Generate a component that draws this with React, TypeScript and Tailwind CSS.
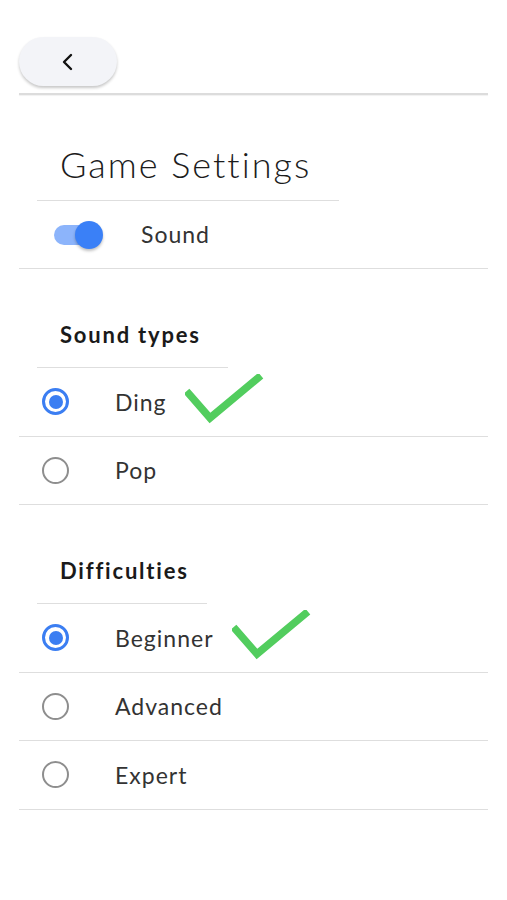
import React from "react";

function Radio({ checked }: { checked: boolean }) {
  return checked ? (
    <div className="w-[27px] h-[27px] rounded-full border-[3px] border-[#3b7ef2] flex items-center justify-center">
      <div className="w-[14px] h-[14px] rounded-full bg-[#3b7ef2]" />
    </div>
  ) : (
    <div className="w-[27px] h-[27px] rounded-full border-[2.5px] border-[#8e8e8e]" />
  );
}

function Row({ label, checked, check }: { label: string; checked: boolean; check?: number }) {
  return (
    <div className="relative h-[68.5px] flex items-center border-b border-[#dedede] pl-[23px]">
      <Radio checked={checked} />
      <span className="ml-[46px] text-[23px] text-[#333333] tracking-[1px]">{label}</span>
      {checked && check !== undefined && (
        <div className="absolute" style={{ left: check, top: 6 }}>
          <svg width="80" height="50" viewBox="0 0 80 50">
            <path d="M4 20 L25 44 L73 4" fill="none" stroke="#52cd5e" strokeWidth="7.5" strokeLinecap="square" />
          </svg>
        </div>
      )}
    </div>
  );
}

function SectionHeader({ label, width }: { label: string; width: number }) {
  return (
    <div className="h-[99px] flex flex-col justify-end">
      <div className="ml-[18px] border-b border-[#dedede] pb-[16px] pl-[23px]" style={{ width }}>
        <span className="text-[22px] font-bold text-[#1a1a1a] tracking-[1.8px]">{label}</span>
      </div>
    </div>
  );
}

export default function App() {
  return (
    <div className="w-[507px] h-[900px] bg-white px-[19px] pt-[37px]" style={{ fontFamily: "Lato, 'Noto Sans', sans-serif" }}>
      <div className="h-[49px] w-[98px] rounded-full bg-[#f3f4f8] shadow-[0_2px_3px_rgba(0,0,0,0.22)] flex items-center justify-center">
        <svg width="14" height="18" viewBox="0 0 14 18">
          <path d="M10 2 L3 9 L10 16" fill="none" stroke="#111" strokeWidth="2.4" strokeLinecap="round" strokeLinejoin="round" />
        </svg>
      </div>
      <div className="mt-[7px] h-[2px] bg-[#dcdcdc] shadow-[0_1px_1px_rgba(0,0,0,0.06)]" />
      <div className="ml-[18px] w-[302px] h-[106px] border-b border-[#dedede] flex items-end pb-[18px] pl-[23px]">
        <span className="text-[36px] font-light text-[#1c1c1c] tracking-[2px] leading-none">Game Settings</span>
      </div>
      <div className="h-[68px] flex items-center border-b border-[#dedede] pl-[35px]">
        <div className="relative w-[46px] h-[20px]">
          <div className="absolute inset-0 rounded-full bg-[#8cb4fb]" />
          <div className="absolute right-[-3px] top-[-4px] w-[28px] h-[28px] rounded-full bg-[#3a80f7] shadow-[0_2px_3px_rgba(0,0,0,0.25)]" />
        </div>
        <span className="ml-[41px] text-[23px] text-[#333333] tracking-[1px]">Sound</span>
      </div>
      <SectionHeader label="Sound types" width={191} />
      <Row label="Ding" checked check={166} />
      <Row label="Pop" checked={false} />
      <SectionHeader label="Difficulties" width={170} />
      <Row label="Beginner" checked check={213} />
      <Row label="Advanced" checked={false} />
      <Row label="Expert" checked={false} />
    </div>
  );
}
